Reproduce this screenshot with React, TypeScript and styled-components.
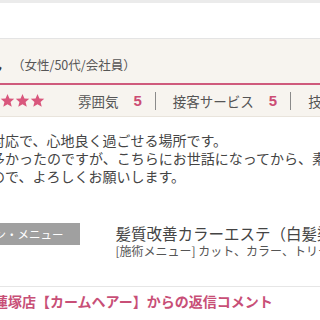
import styled, { createGlobalStyle } from 'styled-components';

const GlobalStyle = createGlobalStyle`
  html, body {
    margin: 0;
    padding: 0;
    overflow: hidden;
    background: #ffffff;
    font-family: "Noto Sans CJK JP", "Noto Sans", sans-serif;
  }
`;

const ratings = [
  { label: '雰囲気', score: 5 },
  { label: '接客サービス', score: 5 },
  { label: '技術・仕上がり', score: 5 }
];

const Star = () => (
  <svg width='15' height='15' viewBox='0 0 24 24'>
    <path
      d='M12 1.5l3.1 7.2 7.7.6-5.9 5 1.9 7.6L12 17.9l-6.8 4 1.9-7.6-5.9-5 7.7-.6z'
      fill='#d9577d'
    />
  </svg>
);

const App = () => {
  return (
    <Page>
      <GlobalStyle />
      <TopBand />
      <BlankArea />

      <ReviewHeader>
        <Reviewer>
          <Name>みどりん</Name>
          <Profile>（女性/50代/会社員）</Profile>
        </Reviewer>
        <RatingRow>
          <Stars>
            {[0, 1, 2, 3, 4].map((i) => (
              <Star key={i} />
            ))}
          </Stars>
          {ratings.map((r, i) => (
            <RatingItem key={r.label} $first={i === 0}>
              <span>{r.label}</span>
              <Score>{r.score}</Score>
            </RatingItem>
          ))}
        </RatingRow>
      </ReviewHeader>

      <ReviewBody>
        <Line>いつも丁寧な対応で、心地良く過ごせる場所です。</Line>
        <Line>以前は悩みが多かったのですが、こちらにお世話になってから、素敵な髪になりました。</Line>
        <Line>また伺いますので、よろしくお願いします。</Line>
      </ReviewBody>

      <MenuRow>
        <MenuLabel>利用したクーポン・メニュー</MenuLabel>
        <MenuInfo>
          <MenuTitle>髪質改善カラーエステ（白髪染め）</MenuTitle>
          <MenuSub>[施術メニュー] カット、カラー、トリートメント</MenuSub>
        </MenuInfo>
      </MenuRow>

      <Divider />

      <ReplyHeading>蓮塚店【カームヘアー】からの返信コメント</ReplyHeading>
    </Page>
  );
};

const Page = styled.div`
  width: 320px;
  height: 320px;
  overflow: hidden;
  color: #555555;
  white-space: nowrap;
`;

const TopBand = styled.div`
  height: 3px;
  background: #ebebeb;
`;

const BlankArea = styled.div`
  height: 35px;
  background: #ffffff;
  border-bottom: 1px solid #e4e4e4;
`;

const ReviewHeader = styled.div`
  background: #f7f4ef;
  border-bottom: 1px solid #e9e4dc;
`;

const Reviewer = styled.div`
  display: flex;
  align-items: center;
  height: 46px;
  padding-top: 6px;
  box-sizing: border-box;
  border-bottom: 2px solid #cf5a7c;
  font-size: 12px;
`;

const Name = styled.span`
  display: inline-block;
  width: 64px;
  margin-left: -62px;
  text-align: right;
  font-size: 13px;
  font-weight: bold;
  color: #333333;
`;

const Profile = styled.span`
  margin-left: 10px;
  font-size: 12.5px;
  color: #555555;
`;

const RatingRow = styled.div`
  display: flex;
  align-items: center;
  height: 31px;
  font-size: 13.5px;
`;

const Stars = styled.div`
  display: flex;
  margin-left: -30px;
  margin-right: 33px;

  svg {
    display: block;
  }
`;

const RatingItem = styled.div<{ $first?: boolean }>`
  display: flex;
  align-items: center;
  gap: 15px;
  line-height: 18px;
  color: #555555;
  ${({ $first }) =>
    $first
      ? ''
      : `
    margin-left: 13px;
    padding-left: 17px;
    border-left: 1px solid #8a8a8a;
  `}
`;

const Score = styled.span`
  font-family: "Liberation Sans", Arial, sans-serif;
  font-weight: bold;
  font-size: 15px;
  color: #cc4d74;
`;

const ReviewBody = styled.div`
  padding-top: 14px;
  margin-left: -93px;
  font-size: 14px;
  line-height: 18px;
  color: #444444;
`;

const Line = styled.div``;

const MenuRow = styled.div`
  display: flex;
  align-items: flex-start;
  margin-top: 38px;
`;

const MenuLabel = styled.div`
  flex: none;
  margin-left: -102px;
  padding: 0 16px;
  height: 22px;
  line-height: 22px;
  background: #a0a0a0;
  color: #ffffff;
  font-size: 11.5px;
`;

const MenuInfo = styled.div`
  margin-left: 36px;
`;

const MenuTitle = styled.div`
  font-size: 15.5px;
  line-height: 20px;
  color: #444444;
`;

const MenuSub = styled.div`
  font-size: 12px;
  line-height: 16px;
  color: #555555;
`;

const Divider = styled.div`
  margin-top: 27px;
  border-top: 1px solid #e6e6e6;
`;

const ReplyHeading = styled.div`
  margin-top: 4px;
  margin-left: -6px;
  font-size: 14px;
  line-height: 20px;
  font-weight: bold;
  color: #c84f77;
`;

export default App;
